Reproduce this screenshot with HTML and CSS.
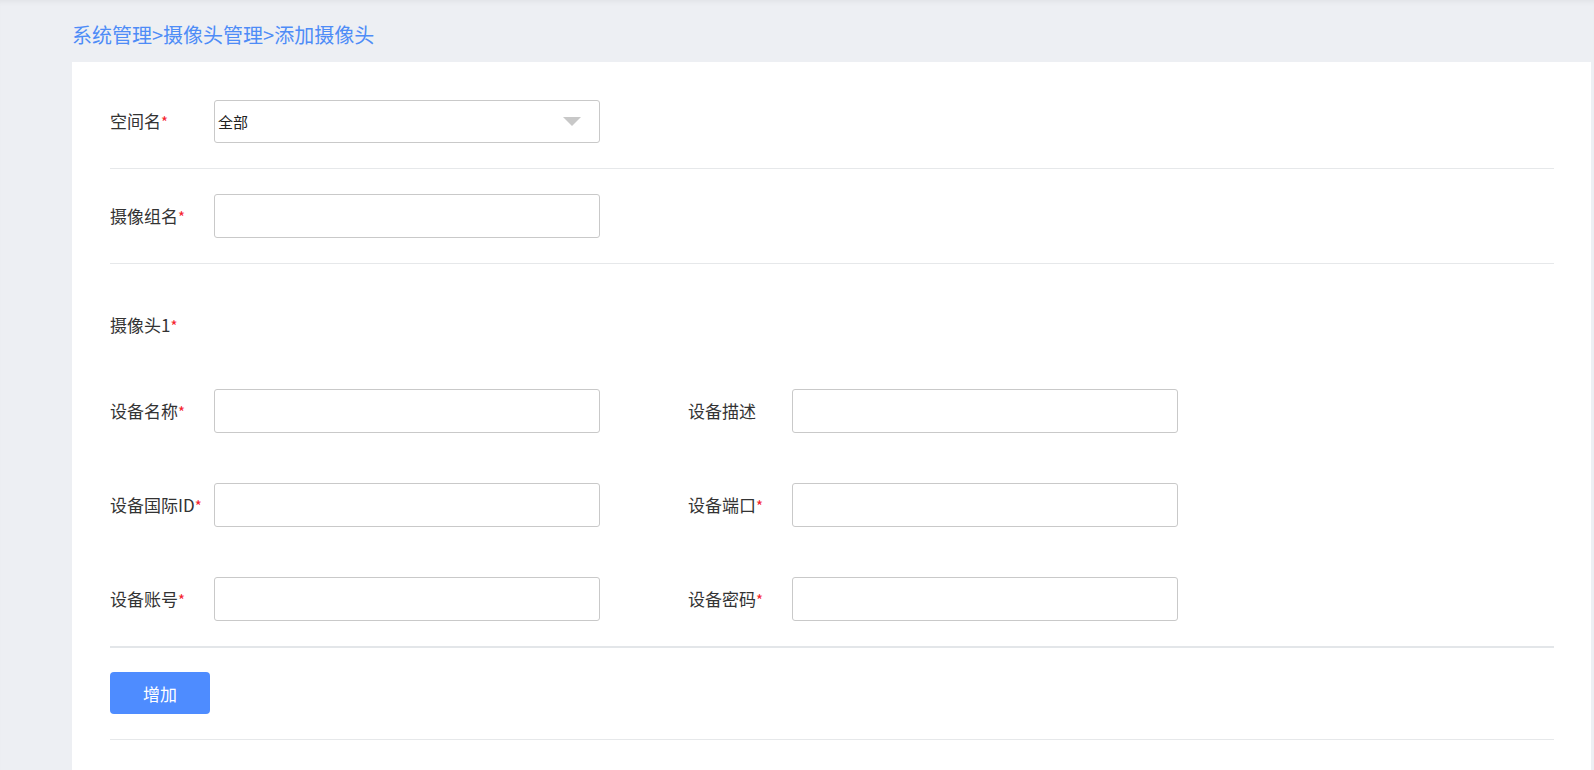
FILE: index.html
```html
<!DOCTYPE html>
<html lang="zh-CN">
<head>
<meta charset="utf-8">
<title>添加摄像头</title>
<link rel="stylesheet" href="styles.css">
</head>
<body>
<div class="page">
  <div class="breadcrumb">系统管理&gt;摄像头管理&gt;添加摄像头</div>
  <div class="card">
    <div class="section s-space">
      <div class="field">
        <label class="label">空间名<span class="req">*</span></label>
        <div class="select">
          <span class="select-text">全部</span>
          <span class="caret"></span>
        </div>
      </div>
    </div>
    <div class="section s-group">
      <div class="field">
        <label class="label">摄像组名<span class="req">*</span></label>
        <input class="input" type="text">
      </div>
    </div>
    <div class="section s-camera">
      <div class="cam-title">摄像头1<span class="req">*</span></div>
      <div class="grid">
        <div class="field">
          <label class="label">设备名称<span class="req">*</span></label>
          <input class="input" type="text">
        </div>
        <div class="field">
          <label class="label">设备描述</label>
          <input class="input" type="text">
        </div>
        <div class="field">
          <label class="label">设备国际ID<span class="req">*</span></label>
          <input class="input" type="text">
        </div>
        <div class="field">
          <label class="label">设备端口<span class="req">*</span></label>
          <input class="input" type="text">
        </div>
        <div class="field">
          <label class="label">设备账号<span class="req">*</span></label>
          <input class="input" type="text">
        </div>
        <div class="field">
          <label class="label">设备密码<span class="req">*</span></label>
          <input class="input" type="text">
        </div>
      </div>
    </div>
    <div class="section s-actions">
      <button class="btn" type="button">增加</button>
    </div>
  </div>
</div>
</body>
</html>
```
FILE: styles.css
```css
* { box-sizing: border-box; }
html, body { height: 100%; }
body {
  margin: 0;
  background: #edeff3;
  font-family: "Noto Sans CJK SC", "Noto Sans", sans-serif;
  color: #333;
  overflow: hidden;
}
.page {
  min-height: 100%;
  padding: 0 3px 0 72px;
  display: flex;
  flex-direction: column;
  box-shadow: inset 0 5px 5px -3px rgba(0,0,0,0.05);
}
.breadcrumb {
  padding-top: 24px;
  height: 62px;
  font-size: 20px;
  line-height: 22px;
  color: #4e8cf7;
}
.card {
  flex: 1;
  background: #fff;
  padding: 0 37px 0 38px;
}
.section { border-bottom: 1px solid #e6e8ea; }
.s-space { padding: 38px 0 25px; }
.s-group { padding: 25px 0 25px; }
.s-camera { padding: 51px 0 25px; border-bottom: 2px solid #e3e6e9; }
.s-actions { padding: 24px 0 25px; }
.field {
  display: flex;
  align-items: center;
  width: 490px;
}
.label {
  width: 104px;
  flex: none;
  font-size: 17px;
  line-height: 20px;
  color: #333;
  white-space: nowrap;
}
.req { color: #f5222d; font-size: 15px; }
.select, .input {
  width: 386px;
  height: 44px;
  border: 1px solid #c9c9c9;
  border-radius: 3px;
  background: #fff;
  font: inherit;
}
.select {
  height: 43px;
  display: flex;
  align-items: center;
  justify-content: space-between;
  padding: 0 18px 0 3px;
}
.select-text { font-size: 15px; color: #222; }
.caret {
  width: 0; height: 0;
  border-left: 9px solid transparent;
  border-right: 9px solid transparent;
  border-top: 9px solid #c8c8c8;
}
.cam-title {
  font-size: 17px;
  line-height: 20px;
  margin-bottom: 53px;
}
.grid {
  display: grid;
  grid-template-columns: 490px 490px;
  column-gap: 88px;
  row-gap: 50px;
}
.btn {
  display: block;
  width: 100px;
  height: 42px;
  border: none;
  border-radius: 4px;
  background: #4e8cff;
  color: #fff;
  font-family: inherit;
  font-size: 17px;
}
```
